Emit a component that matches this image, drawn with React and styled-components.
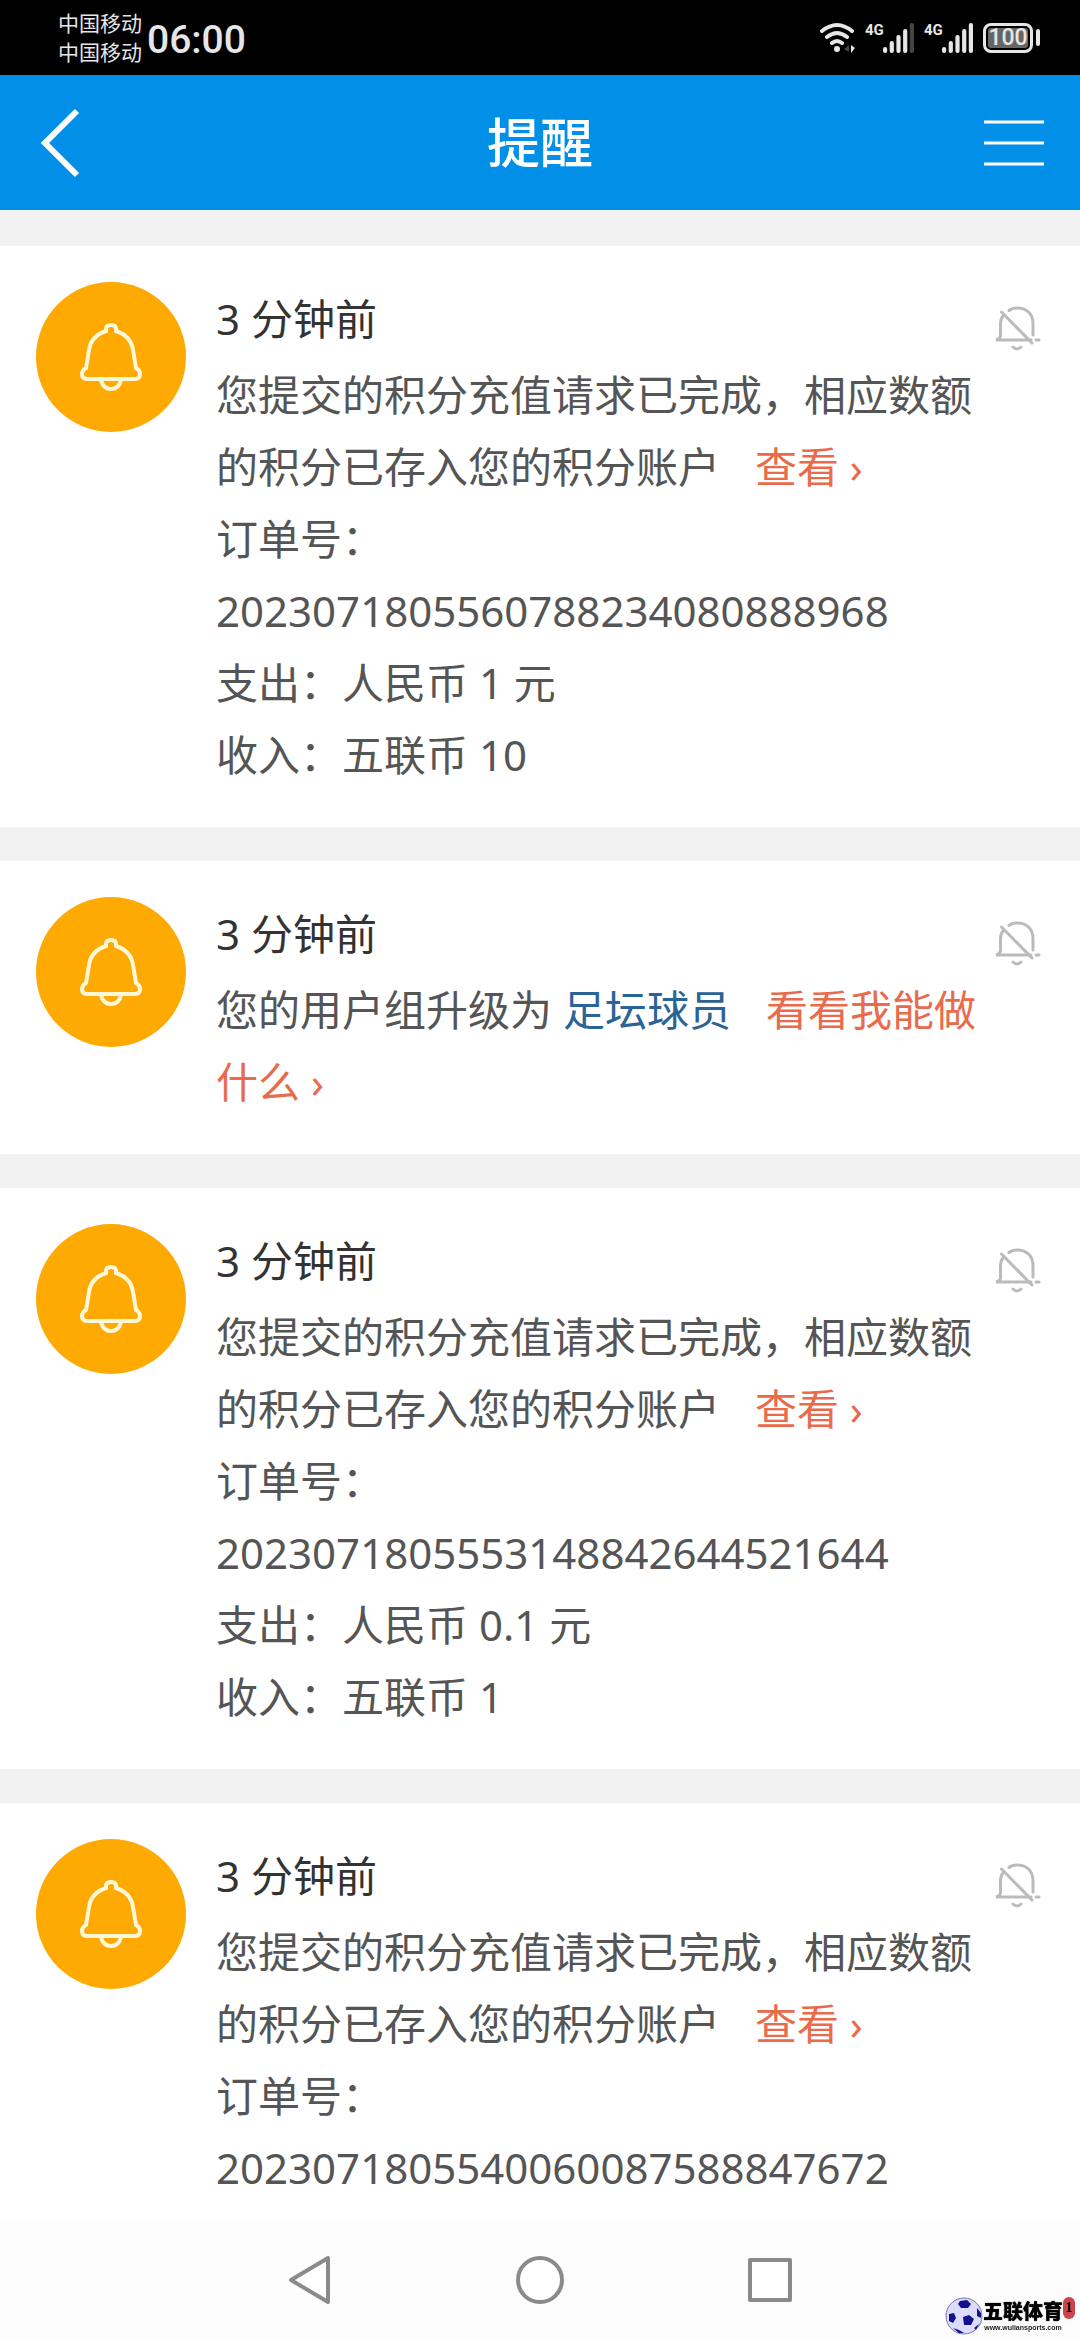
import styled, { createGlobalStyle } from 'styled-components';

const GlobalStyle = createGlobalStyle`
  * {
    box-sizing: border-box;
  }

  body {
    margin: 0;
    background: #fff;
    color: #333;
    font-family: 'Noto Sans', 'Noto Sans CJK SC', sans-serif;
  }

  button {
    display: flex;
    padding: 0;
    border: 0;
    background: none;
    color: inherit;
    font: inherit;
    cursor: pointer;
  }

  svg {
    display: block;
  }
`;

const Screen = styled.div`
  display: flex;
  flex-direction: column;
  height: 100vh;
`;

const StatusBar = styled.div`
  display: flex;
  flex: none;
  align-items: center;
  justify-content: space-between;
  height: 75px;
  padding: 0 40px 0 58px;
  background: #000;
  color: #e6e6e6;
`;

const StatusGroup = styled.div`
  display: flex;
  align-items: center;
  gap: ${({ $gap }) => $gap}px;
`;

const Carriers = styled.div`
  font-size: 21px;
  line-height: 29px;
`;

const Clock = styled.time`
  padding-top: 4px;
  font-family: Roboto, 'Noto Sans', sans-serif;
  font-size: 39px;
  font-weight: 500;
  line-height: 48px;
`;

const HeaderBar = styled.header`
  display: grid;
  flex: none;
  grid-template-columns: 60px 1fr 60px;
  align-items: center;
  height: 135px;
  padding: 0 36px;
  background: #018fe8;
  color: #fff;
`;

const Title = styled.h1`
  margin: 0;
  font-size: 53px;
  font-weight: 500;
  line-height: 72px;
  text-align: center;
`;

const NoticeList = styled.main`
  display: flex;
  flex: 1;
  flex-direction: column;
  gap: 34px;
  min-height: 0;
  padding-top: 36px;
  overflow-y: auto;
  scrollbar-width: none;
  background: #f2f2f2;
`;

const NoticeCard = styled.article`
  display: flex;
  flex: none;
  align-items: flex-start;
  gap: 30px;
  padding: 36px;
  background: #fff;
`;

const Avatar = styled.div`
  display: flex;
  flex: none;
  align-items: center;
  justify-content: center;
  width: 150px;
  height: 150px;
  border-radius: 50%;
  background: #ffa903;
`;

const NoticeBody = styled.div`
  flex: 1;
  min-width: 0;
  font-size: 42px;
`;

const NoticeTime = styled.time`
  display: block;
  padding-bottom: 3px;
  line-height: 74px;
`;

const NoticeText = styled.p`
  margin: 0;
  color: #555;
  line-height: 72px;
`;

const TextLink = styled.a`
  color: ${({ $color }) => $color};
  text-decoration: none;
`;

const ActionLink = styled(TextLink)`
  margin-left: 24px;
`;

const MuteButton = styled.button`
  flex: none;
  margin: 22px 3px 0 -24px;
`;

const NavBar = styled.nav`
  display: flex;
  flex: none;
  align-items: center;
  justify-content: center;
  gap: 182px;
  height: 120px;
  background: #fcfcfc;
`;

const Watermark = styled.div`
  position: fixed;
  right: 5px;
  bottom: 5px;
  display: flex;
  align-items: center;
`;

const BrandName = styled.div`
  color: #000;
  font-size: 20px;
  font-weight: 900;
  line-height: 24px;
  text-shadow: 0 0 1px #000;
`;

const BrandUrl = styled.div`
  color: #222;
  font-family: 'Liberation Sans', sans-serif;
  font-size: 7px;
  font-weight: 700;
  line-height: 8px;
  text-align: center;
`;

const Seal = styled.div`
  align-self: flex-start;
  width: 12px;
  border-radius: 6px;
  background: #c9444c;
  color: #000;
  font-family: 'Liberation Serif', serif;
  font-size: 14px;
  font-weight: 700;
  line-height: 22px;
  text-align: center;
`;

const ORANGE = '#e96b4c';
const BLUE = '#2a6496';

function WifiIcon() {
  return (
    <svg width="35" height="32" viewBox="0 0 35 32" fill="none" stroke="#e6e6e6" strokeWidth="4" strokeLinecap="round">
      <path d="M2 9Q17 -3 32 9M7 15Q17 7 27 15M12 21Q17 17 22 21" />
      <circle cx="17" cy="27" r="3" fill="#e6e6e6" stroke="none" />
      <path d="M29 23v7l-5-3z" fill="#444" stroke="none" />
      <path d="M31 23v8l4-5z" fill="#e6e6e6" stroke="none" />
    </svg>
  );
}

const SignalText = styled.span`
  align-self: flex-start;
  width: 18px;
  font-family: Roboto, sans-serif;
  font-size: 15px;
  font-weight: 700;
  line-height: 15px;
`;

function Signal({ level }) {
  return (
    <StatusGroup $gap={0}>
      <SignalText>4G</SignalText>
      <svg width="31" height="30" viewBox="0 0 31 30">
        {[6, 12, 18, 24, 30].map((height, index) => (
          <rect
            key={height}
            x={index * 6.7}
            y={30 - height}
            width="4.2"
            height={height}
            rx="2"
            fill={index < level ? '#e6e6e6' : '#444'}
          />
        ))}
      </svg>
    </StatusGroup>
  );
}

const BatteryCase = styled.div`
  display: flex;
  align-items: center;
  gap: 3px;

  &::after {
    width: 4px;
    height: 17px;
    border-radius: 2px;
    background: #e6e6e6;
    content: '';
  }
`;

const BatteryLevel = styled.div`
  width: 50px;
  padding: 2px;
  border: 3px solid #e6e6e6;
  border-radius: 8px;

  span {
    display: block;
    border-radius: 3px;
    background: #666;
    font-family: Roboto, sans-serif;
    font-size: 23px;
    font-weight: 500;
    line-height: 20px;
    text-align: center;
  }
`;

function BellIcon() {
  return (
    <svg width="64" height="70" viewBox="0 0 64 70" fill="none" stroke="#fff8d8" strokeWidth="4">
      <path d="M27 9V7Q27 3 32 3T37 7V9Q52 14 54 28L57 46Q61 48 61 52Q61 57 56 57H8Q3 57 3 52Q3 48 7 46L10 28Q12 14 27 9Z" />
      <path d="M22 58Q24 67 32 67T42 58" />
    </svg>
  );
}

function BellOffIcon() {
  return (
    <svg width="48" height="48" viewBox="0 0 48 48" fill="none" stroke="#bbb" strokeWidth="3" strokeLinecap="round">
      <path d="M16 6.500Q19 4 24 4C33 4 40 9 40 20V31" />
      <path d="M10 12Q7.500 15 7.500 20V32Q7 35 3 36H38M43 36H46" />
      <path d="M8.500 8L39 39M20 43Q24 47 28 43" />
    </svg>
  );
}

function Notice({ children }) {
  return (
    <NoticeCard>
      <Avatar>
        <BellIcon />
      </Avatar>
      <NoticeBody>
        <NoticeTime>3 分钟前</NoticeTime>
        {children}
      </NoticeBody>
      <MuteButton type="button" aria-label="屏蔽">
        <BellOffIcon />
      </MuteButton>
    </NoticeCard>
  );
}

function RechargeNotice({ order, paid, income }) {
  return (
    <Notice>
      <NoticeText>
        您提交的积分充值请求已完成，相应数额的积分已存入您的积分账户{' '}
        <ActionLink href="#credit" $color={ORANGE}>
          查看 ›
        </ActionLink>
      </NoticeText>
      <NoticeText>订单号： {order}</NoticeText>
      {paid && <NoticeText>支出：人民币 {paid} 元</NoticeText>}
      {income && <NoticeText>收入：五联币 {income}</NoticeText>}
    </Notice>
  );
}

export default function App() {
  return (
    <>
      <GlobalStyle />
      <Screen>
        <StatusBar>
          <StatusGroup $gap={5}>
            <Carriers>
              <div>中国移动</div>
              <div>中国移动</div>
            </Carriers>
            <Clock>06:00</Clock>
          </StatusGroup>
          <StatusGroup $gap={10}>
            <WifiIcon />
            <Signal level={4} />
            <Signal level={5} />
            <BatteryCase>
              <BatteryLevel>
                <span>100</span>
              </BatteryLevel>
            </BatteryCase>
          </StatusGroup>
        </StatusBar>
        <HeaderBar>
          <button type="button" aria-label="返回">
            <svg width="48" height="72" viewBox="0 0 48 72" fill="none" stroke="#fff" strokeWidth="6">
              <path d="M41 4L9 36L41 68" />
            </svg>
          </button>
          <Title>提醒</Title>
          <button type="button" aria-label="菜单">
            <svg width="60" height="46" viewBox="0 0 60 46" stroke="#fff" strokeWidth="3">
              <path d="M0 2H60M0 23H60M0 44H60" />
            </svg>
          </button>
        </HeaderBar>
        <NoticeList>
          <RechargeNotice order="2023071805560788234080888968" paid="1" income="10" />
          <Notice>
            <NoticeText>
              您的用户组升级为{' '}
              <TextLink href="#group" $color={BLUE}>
                足坛球员
              </TextLink>{' '}
              <ActionLink href="#usergroup" $color={ORANGE}>
                看看我能做什么 ›
              </ActionLink>
            </NoticeText>
          </Notice>
          <RechargeNotice order="2023071805553148842644521644" paid="0.1" income="1" />
          <RechargeNotice order="2023071805540060087588847672" />
        </NoticeList>
        <NavBar>
          <button type="button" aria-label="后退">
            <svg width="48" height="52" viewBox="0 0 48 52" fill="#fff" stroke="#8a8a8a" strokeWidth="4" strokeLinejoin="round">
              <path d="M42 4V48L5 26Z" />
            </svg>
          </button>
          <button type="button" aria-label="主页">
            <svg width="48" height="52" viewBox="0 0 48 52" fill="#fff" stroke="#8a8a8a" strokeWidth="4">
              <circle cx="24" cy="26" r="22" />
            </svg>
          </button>
          <button type="button" aria-label="最近任务">
            <svg width="48" height="52" viewBox="0 0 48 52" fill="#fff" stroke="#8a8a8a" strokeWidth="4" strokeLinejoin="round">
              <path d="M4 6H44V46H4Z" />
            </svg>
          </button>
        </NavBar>
      </Screen>
      <Watermark>
        <svg width="38" height="38" viewBox="0 0 38 38">
          <circle cx="19" cy="19" r="18" fill="#dcdcf8" stroke="#77a" />
          <path
            d="M15 4L22 3L26 7L23 11L16 11L13 7ZM4 17L9 16L11 21L8 26L4 24ZM18 20L24 18L29 22L26 28L19 28ZM32 11L36 16L36 21L32 19ZM8 31L14 33L19 36L14 36ZM29 31L34 27L31 33Z"
            fill="#12128c"
          />
        </svg>
        <div>
          <BrandName>五联体育</BrandName>
          <BrandUrl>www.wuliansports.com</BrandUrl>
        </div>
        <Seal>1</Seal>
      </Watermark>
    </>
  );
}
